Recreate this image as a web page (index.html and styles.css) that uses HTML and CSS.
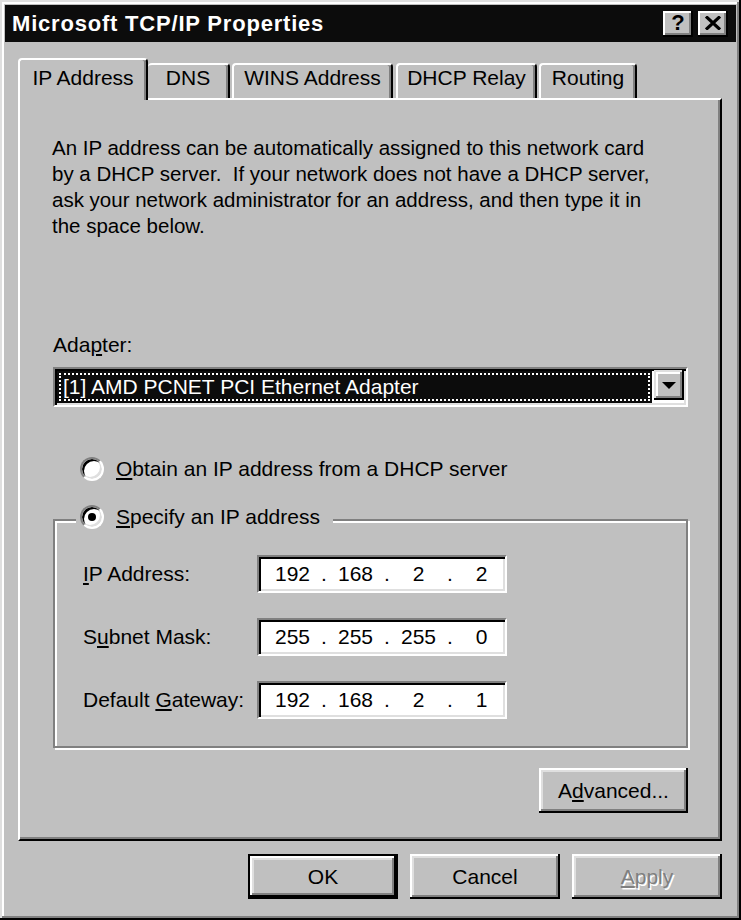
FILE: index.html
```html
<!DOCTYPE html>
<html>
<head>
<meta charset="utf-8">
<title>Microsoft TCP/IP Properties</title>
<link rel="stylesheet" href="styles.css">
</head>
<body>
<div class="window">
  <div class="titlebar">
    <span class="title">Microsoft TCP/IP Properties</span>
    <div class="tb-buttons">
      <span class="tb-btn">?</span>
      <span class="tb-btn">
        <svg width="16" height="14" viewBox="0 0 16 14"><path d="M1 0.5 L15 13.5 M15 0.5 L1 13.5" stroke="#000" stroke-width="3.2" fill="none"/></svg>
      </span>
    </div>
  </div>
  <div class="content">
    <div class="tabs">
      <div class="tab active t-ip">IP Address</div>
      <div class="tab t-dns">DNS</div>
      <div class="tab t-wins">WINS Address</div>
      <div class="tab t-dhcp">DHCP Relay</div>
      <div class="tab t-route">Routing</div>
    </div>
    <div class="panel">
      <p class="desc">An IP address can be automatically assigned to this network card<br>by a DHCP server.&nbsp; If your network does not have a DHCP server,<br>ask your network administrator for an address, and then type it in<br>the space below.</p>
      <div class="adapter-label">Ada<u>p</u>ter:</div>
      <div class="combo">
        <div class="combo-sel"><div class="combo-focus">[1] AMD PCNET PCI Ethernet Adapter</div></div>
        <div class="combo-btn">
          <svg width="14" height="7" viewBox="0 0 14 7"><polygon points="0,0 14,0 7,7" fill="#000"/></svg>
        </div>
      </div>
      <div class="radio-row obtain">
        <span class="radio"></span>
        <span><u>O</u>btain an IP address from a DHCP server</span>
      </div>
      <fieldset class="group">
        <legend class="radio-row legend">
          <span class="radio checked"><span class="dot"></span></span>
          <span><u>S</u>pecify an IP address</span>
        </legend>
        <div class="ip-row">
          <span class="ip-label"><u>I</u>P Address:</span>
          <div class="ipfield"><span class="oct">192</span><span class="sep">.</span><span class="oct">168</span><span class="sep">.</span><span class="oct">2</span><span class="sep">.</span><span class="oct">2</span></div>
        </div>
        <div class="ip-row">
          <span class="ip-label">S<u>u</u>bnet Mask:</span>
          <div class="ipfield"><span class="oct">255</span><span class="sep">.</span><span class="oct">255</span><span class="sep">.</span><span class="oct">255</span><span class="sep">.</span><span class="oct">0</span></div>
        </div>
        <div class="ip-row">
          <span class="ip-label">Default <u>G</u>ateway:</span>
          <div class="ipfield"><span class="oct">192</span><span class="sep">.</span><span class="oct">168</span><span class="sep">.</span><span class="oct">2</span><span class="sep">.</span><span class="oct">1</span></div>
        </div>
      </fieldset>
      <div class="adv-row"><span class="btn adv">A<u>d</u>vanced...</span></div>
    </div>
    <div class="footer">
      <span class="btn default">OK</span>
      <span class="btn">Cancel</span>
      <span class="btn disabled"><u>A</u>pply</span>
    </div>
  </div>
</div>
</body>
</html>
```
FILE: styles.css
```css
* { box-sizing: border-box; }
html, body { margin: 0; padding: 0; background: #c0c0c0; }
body {
  font-family: "Liberation Sans", Arial, sans-serif;
  font-size: 21px;
  line-height: 26px;
  color: #000;
}
u { text-decoration-thickness: 2px; text-underline-offset: 2px; }

.window {
  width: 741px;
  height: 920px;
  padding: 5px;
  background: #c0c0c0;
  box-shadow: inset -2px -2px 0 #000, inset 2px 2px 0 #dfdfdf, inset -4px -4px 0 #808080, inset 4px 4px 0 #fff;
  display: flex;
  flex-direction: column;
}

.titlebar {
  height: 37px;
  background: #0c0c0c;
  display: flex;
  align-items: center;
  justify-content: space-between;
  padding: 0 8px 0 7px;
}
.title {
  color: #fff;
  font-weight: bold;
  font-size: 22px;
  letter-spacing: 0.8px;
}
.tb-buttons { display: flex; gap: 5px; }
.tb-btn {
  width: 30px;
  height: 26px;
  background: #c0c0c0;
  box-shadow: inset -2px -2px 0 #000, inset 2px 2px 0 #fff, inset -4px -4px 0 #808080;
  display: flex;
  align-items: center;
  justify-content: center;
  font-weight: bold;
  font-size: 22px;
  line-height: 22px;
  padding-bottom: 2px;
}

.content {
  flex: 1;
  display: flex;
  flex-direction: column;
  padding: 16px 14px 0 13px;
}

.tabs {
  display: flex;
  align-items: flex-end;
  height: 42px;
  margin-bottom: -2px;
  position: relative;
  z-index: 1;
}
.tab {
  height: 35px;
  margin-bottom: 2px;
  text-align: center;
  background: #c0c0c0;
  border-top: 2px solid #fff;
  border-left: 2px solid #fff;
  border-right: 2px solid #000;
  border-top-left-radius: 4px;
  border-top-right-radius: 4px;
  box-shadow: inset -2px 0 0 #808080;
}
.tab.active { height: 42px; margin-bottom: 0; padding-top: 5px; }
.t-ip { width: 130px; }
.t-dns { width: 82px; border-left: none; }
.t-wins { width: 161px; margin-left: 2px; }
.t-dhcp { width: 141px; margin-left: 3px; }
.t-route { width: 98px; margin-left: 2px; }

.panel {
  display: flex;
  flex-direction: column;
  border-top: 2px solid #fff;
  border-left: 2px solid #fff;
  border-right: 2px solid #000;
  border-bottom: 2px solid #000;
  box-shadow: inset -2px -2px 0 #808080;
  padding: 0 32px 26px 33px;
}

.desc { margin: 35px 0 0 -1px; font-size: 20.5px; }
.adapter-label { margin-top: 93px; }

.combo {
  margin-top: 9px;
  height: 40px;
  display: flex;
  background: #fff;
  border-top: 2px solid #808080;
  border-left: 2px solid #808080;
  border-bottom: 2px solid #fff;
  border-right: 2px solid #fff;
  box-shadow: inset 2px 2px 0 #000, inset -2px -2px 0 #dfdfdf;
  padding: 2px 2px 2px 2px;
}
.combo-sel {
  flex: 1;
  background: #0c0c0c;
  padding: 2px;
  margin-right: 2px;
}
.combo-focus {
  height: 100%;
  border: 2px dotted #fff;
  color: #fff;
  padding-left: 2px;
  line-height: 24px;
}
.combo-btn {
  width: 30px;
  height: 30px;
  margin-top: -1px;
  background: #c0c0c0;
  box-shadow: inset -2px -2px 0 #000, inset 2px 2px 0 #dfdfdf, inset -4px -4px 0 #808080, inset 4px 4px 0 #fff;
  display: flex;
  align-items: center;
  justify-content: center;
}

.radio-row { display: flex; align-items: center; gap: 12px; }
.obtain { margin-top: 49px; margin-left: 27px; }
.radio {
  width: 24px;
  height: 24px;
  border-radius: 50%;
  background: #fff;
  border: 2px solid;
  border-color: #808080 #fff #fff #808080;
  box-shadow: inset 2px 2px 0 #000, inset -2px -2px 0 #dfdfdf;
  display: flex;
  align-items: center;
  justify-content: center;
}
.dot { width: 8px; height: 8px; border-radius: 50%; background: #000; }

.group {
  margin: 22px 0 0 0;
  padding: 19px 0 27px 0;
  min-width: 0;
  border: 2px solid #808080;
  box-shadow: inset 2px 2px 0 #fff, 2px 2px 0 #fff;
  display: flex;
  flex-direction: column;
  gap: 25px;
}
.legend {
  margin-left: 21px;
  padding: 0 13px 6px 4px;
  background: #c0c0c0;
}

.ip-row { display: flex; align-items: center; padding-left: 28px; }
.ip-label { width: 174px; }
.ipfield {
  width: 250px;
  height: 38px;
  display: flex;
  align-items: center;
  background: #fff;
  border-top: 2px solid #808080;
  border-left: 2px solid #808080;
  border-bottom: 2px solid #fff;
  border-right: 2px solid #fff;
  box-shadow: inset 2px 2px 0 #000, inset -2px -2px 0 #dfdfdf;
  padding-left: 9px;
  overflow: hidden;
}
.oct { width: 49px; flex-shrink: 0; text-align: center; }
.sep { width: 14px; flex-shrink: 0; text-align: center; }

.adv-row { display: flex; justify-content: flex-end; margin-top: 20px; }

.btn {
  display: flex;
  align-items: center;
  justify-content: center;
  width: 150px;
  height: 45px;
  background: #c0c0c0;
  box-shadow: inset -2px -2px 0 #000, inset 2px 2px 0 #fff, inset -4px -4px 0 #808080, inset 4px 4px 0 #dfdfdf;
}
.adv { width: 149px; }
.btn.default {
  border: 2px solid #000;
}
.btn.disabled {
  color: #808080;
  text-shadow: 1.5px 1.5px 0 #fff;
}

.footer {
  display: flex;
  justify-content: flex-end;
  gap: 12px;
  margin-top: 13px;
}
```
